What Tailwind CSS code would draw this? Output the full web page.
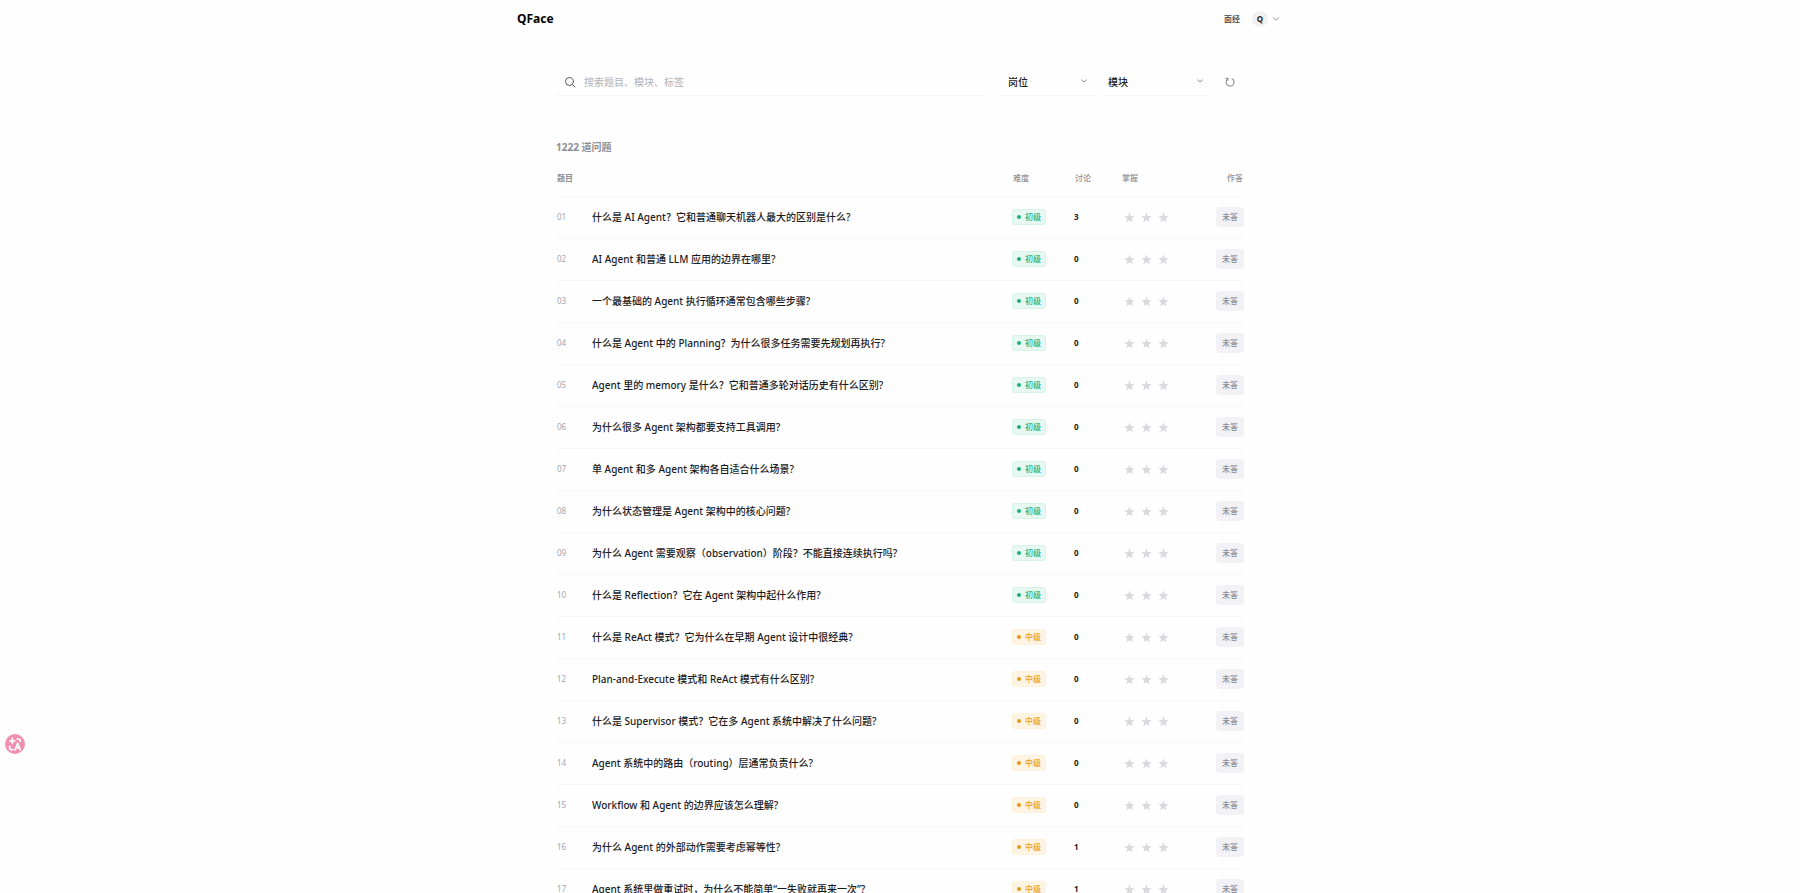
<!DOCTYPE html>
<html lang="zh-CN">
<head>
    <meta charset="UTF-8">
    <meta name="viewport" content="width=device-width, initial-scale=1.0">
    <title>QFace - 面试题库</title>
    <script src="https://cdn.jsdelivr.net/npm/@tailwindcss/browser@4"></script>
</head>
<body class="bg-[#fefefe] text-[#1c1c1f] font-['Noto_Sans','Noto_Sans_CJK_SC',sans-serif] h-screen overflow-hidden">
    <!-- Navbar -->
    <header class="max-w-[766px] mx-auto h-[38px] flex items-center justify-between">
        <a href="#" class="text-[12px] leading-4 font-bold text-black">QFace</a>
        <nav class="flex items-center gap-3">
            <a href="#" class="text-[8px] leading-4 font-medium text-[#3c3c42]">面经</a>
            <button type="button" aria-label="账户菜单" class="flex items-center gap-1 pr-[3px]">
                <span class="size-4 rounded-full bg-[#f1f1f4] flex items-center justify-center text-[8px] leading-none font-bold">Q</span>
                <svg class="size-2 text-[#77777d]" viewBox="0 0 24 24" fill="none" stroke="currentColor" stroke-width="2.5" stroke-linecap="round" stroke-linejoin="round"><path d="M4 8l8 8 8-8"/></svg>
            </button>
        </nav>
    </header>

    <main class="max-w-[688px] mx-auto pt-[30px]">
        <!-- Filters -->
        <form class="flex items-center gap-2">
            <label class="flex-1 flex items-center gap-2 h-7 pl-2 mr-2 border-b border-[#f5f5f8]">
                <svg class="size-3 text-[#55555b]" viewBox="0 0 24 24" fill="none" stroke="currentColor" stroke-width="2" stroke-linecap="round"><circle cx="11" cy="11" r="8"/><path d="M17 17l5 5"/></svg>
                <input type="search" aria-label="搜索" placeholder="搜索题目、模块、标签" class="flex-1 text-[10px] leading-4 outline-none placeholder:text-[#b2b2b8]">
            </label>
            <div class="relative w-24 h-7 border-b border-[#f5f5f8]">
                <select aria-label="岗位" class="appearance-none w-full h-full pl-2 text-[10px] font-medium outline-none">
                    <option>岗位</option>
                </select>
                <svg class="absolute right-2 top-[9px] size-2 text-[#8a8a90] pointer-events-none" viewBox="0 0 24 24" fill="none" stroke="currentColor" stroke-width="3" stroke-linecap="round" stroke-linejoin="round"><path d="M5 9l7 6 7-6"/></svg>
            </div>
            <div class="relative w-26 h-7 border-b border-[#f5f5f8]">
                <select aria-label="模块" class="appearance-none w-full h-full pl-1 text-[10px] font-medium outline-none">
                    <option>模块</option>
                </select>
                <svg class="absolute right-1 top-[9px] size-2 text-[#8a8a90] pointer-events-none" viewBox="0 0 24 24" fill="none" stroke="currentColor" stroke-width="3" stroke-linecap="round" stroke-linejoin="round"><path d="M5 9l7 6 7-6"/></svg>
            </div>
            <button type="reset" aria-label="重置" class="size-7 flex items-center justify-center text-[#88888e]">
                <svg class="size-[10px]" viewBox="0 0 24 24" fill="none" stroke="currentColor" stroke-width="2.5" stroke-linecap="round" stroke-linejoin="round"><path d="M17 4a9.500 9.500 0 1 1-11 1M2 3h5v5"/></svg>
            </button>
        </form>

        <!-- Question list -->
        <h1 class="mt-[43px] text-[10px] leading-4 font-bold text-[#8e8e94]"><span id="total"></span> 道问题</h1>
        <table class="w-full mt-[5px] table-fixed text-left">
            <thead>
                <tr class="h-9 border-b border-[#f6f6f8] text-[8px] leading-4 text-[#8e8e94]">
                    <th scope="col" class="w-9 pl-px font-bold whitespace-nowrap">题目</th>
                    <td></td>
                    <th scope="col" class="w-[62px] pl-px font-medium">难度</th>
                    <th scope="col" class="w-[47px] pl-px font-medium">讨论</th>
                    <th scope="col" class="w-[70px] pl-px font-medium">掌握</th>
                    <th scope="col" class="w-[53px] pr-px font-medium text-right">作答</th>
                </tr>
            </thead>
            <tbody id="questionList"></tbody>
        </table>
    </main>

    <!-- Translate button -->
    <button type="button" aria-label="翻译" class="fixed left-[5px] top-[734px] size-5 rounded-full bg-[#f08fb0] flex items-center justify-center text-white">
        <svg class="size-4" viewBox="0 0 24 24" fill="none" stroke="currentColor" stroke-width="2.500" stroke-linecap="round" stroke-linejoin="round">
            <path d="M8 2.500l1.300 3.700L13 7.500 9.300 8.800 8 12.500 6.700 8.800 3 7.500l3.700-1.300z" fill="currentColor" stroke-width="1"/>
            <path d="M4 15.500v2a3 3 0 0 0 3 3h1.500M15 4.500h2a3 3 0 0 1 3 3V8"/>
            <path d="M12 21l4-10 4 10M13.500 18h5"/>
        </svg>
    </button>

    <script>
        const total = 1222;
        // [title, level, comments]
        const questions = [
            ['什么是 AI Agent？它和普通聊天机器人最大的区别是什么?', 'easy', 3],
            ['AI Agent 和普通 LLM 应用的边界在哪里?', 'easy', 0],
            ['一个最基础的 Agent 执行循环通常包含哪些步骤?', 'easy', 0],
            ['什么是 Agent 中的 Planning？为什么很多任务需要先规划再执行?', 'easy', 0],
            ['Agent 里的 memory 是什么？它和普通多轮对话历史有什么区别?', 'easy', 0],
            ['为什么很多 Agent 架构都要支持工具调用?', 'easy', 0],
            ['单 Agent 和多 Agent 架构各自适合什么场景?', 'easy', 0],
            ['为什么状态管理是 Agent 架构中的核心问题?', 'easy', 0],
            ['为什么 Agent 需要观察（observation）阶段？不能直接连续执行吗?', 'easy', 0],
            ['什么是 Reflection？它在 Agent 架构中起什么作用?', 'easy', 0],
            ['什么是 ReAct 模式？它为什么在早期 Agent 设计中很经典?', 'medium', 0],
            ['Plan-and-Execute 模式和 ReAct 模式有什么区别?', 'medium', 0],
            ['什么是 Supervisor 模式？它在多 Agent 系统中解决了什么问题?', 'medium', 0],
            ['Agent 系统中的路由（routing）层通常负责什么?', 'medium', 0],
            ['Workflow 和 Agent 的边界应该怎么理解?', 'medium', 0],
            ['为什么 Agent 的外部动作需要考虑幂等性?', 'medium', 1],
            ['Agent 系统里做重试时，为什么不能简单“一失败就再来一次”?', 'medium', 1]
        ];
        const levels = {
            easy: { label: '初级', badge: 'bg-[#e6f8f1] border-[#d6f3e8] text-[#1fb480]', dot: 'bg-[#1fae7c]' },
            medium: { label: '中级', badge: 'bg-[#fef4e4] border-[#fdf0dc] text-[#eb9f22]', dot: 'bg-[#e8991a]' }
        };
        const star = n => `
            <button type="button" aria-label="掌握程度 ${n}" class="size-[17px] flex items-center justify-center text-[#dadade]">
                <svg class="size-[11px]" viewBox="0 0 24 24" fill="currentColor"><path d="M12 1l3 7.600 8.200.6-6.300 5.200 2 8L12 18l-6.900 4.400 2-8L.8 9.200 9 8.600z"/></svg>
            </button>`;

        document.getElementById('total').textContent = total;
        document.getElementById('questionList').innerHTML = questions.map(([title, level, comments], i) => `
            <tr class="h-[42px] border-b border-[#f6f6f8]">
                <td class="pl-px text-[8px] leading-4 text-[#a5a5ab]">${String(i + 1).padStart(2, '0')}</td>
                <td class="text-[10px] leading-4 font-medium truncate"><a href="#">${title}</a></td>
                <td>
                    <span class="flex w-[34px] h-4 items-center justify-center gap-1 rounded-[3px] border text-[8px] leading-none font-medium ${levels[level].badge}">
                        <i class="size-1 rounded-full ${levels[level].dot}"></i>${levels[level].label}
                    </span>
                </td>
                <td class="text-[8px] leading-4 font-bold">${comments}</td>
                <td><div class="flex">${star(1)}${star(2)}${star(3)}</div></td>
                <td><button type="button" class="block ml-auto w-7 h-5 rounded-[4px] bg-[#f2f2f6] text-[8px] leading-none font-medium text-[#8c8c92]">未答</button></td>
            </tr>`).join('');
    </script>
</body>
</html>
